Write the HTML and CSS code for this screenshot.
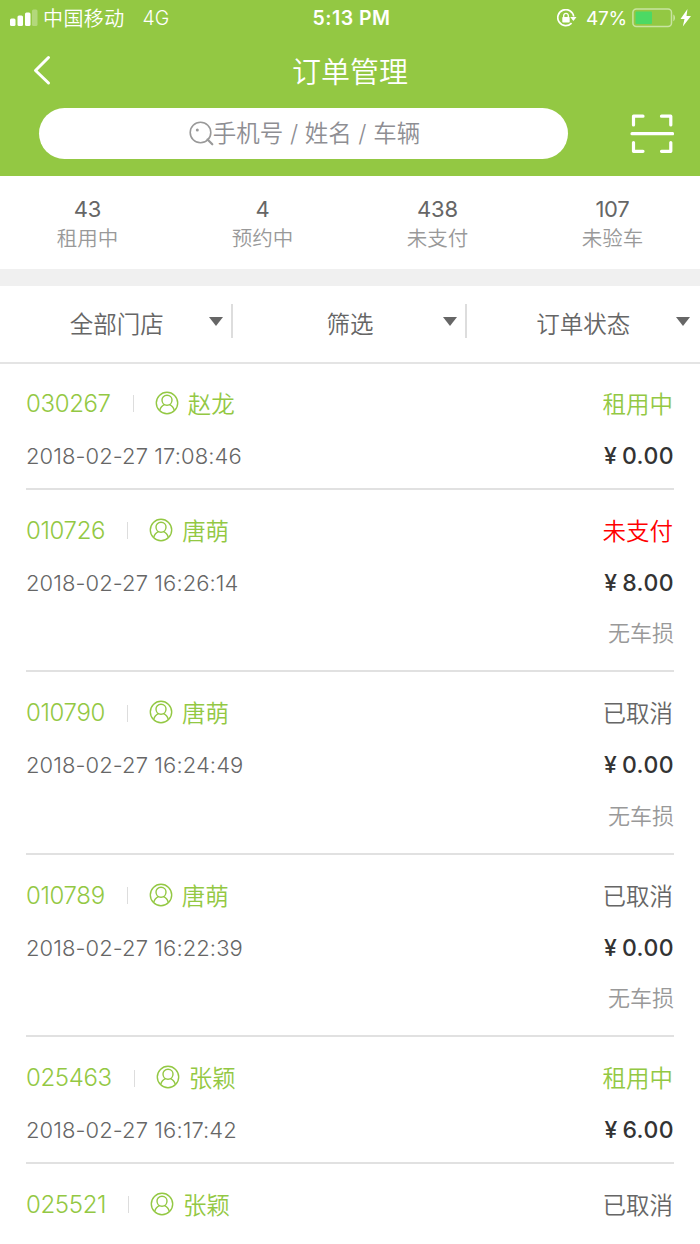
FILE: index.html
```
<!DOCTYPE html>
<html lang="zh-CN">
<head>
<meta charset="utf-8">
<title>订单管理</title>
<link rel="stylesheet" href="styles.css">
</head>
<body>
<svg class="defs" width="0" height="0" aria-hidden="true">
  <symbol id="user" viewBox="0 0 24 24"><g fill="none" stroke="currentColor" stroke-width="1.400"><circle cx="12" cy="12" r="10.700"/><path d="M12 4.200c3.100 0 5 2.200 5 4.900 0 2.900-2 5.200-5 5.200s-5-2.300-5-5.200c0-2.700 1.900-4.900 5-4.900zM4.700 19.500c.8-3 2.600-4.900 5-5.800v-.6M19.300 19.500c-.8-3-2.600-4.900-5-5.800v-.6"/></g></symbol>
</svg>
<header class="header">
  <div class="status-bar">
    <div class="carrier">
      <svg width="28" height="18" viewBox="0 0 28 18" fill="#fff"><rect x="0" y="9.500" width="5.500" height="7.500" rx="1.500"/><rect x="7.500" y="6.500" width="5.500" height="10.500" rx="1.500"/><rect x="15" y="3.500" width="5.500" height="13.500" rx="1.500"/><rect x="22" y=".5" width="5.500" height="16.500" rx="1.500" opacity=".3"/></svg>
      <span class="carrier-name">中国移动</span><span class="network">4G</span>
    </div>
    <div class="clock">5:13 PM</div>
    <div class="power">
      <svg class="lock" width="20" height="18" viewBox="0 0 20 18"><path d="M14.600 14.100A8 8 0 1 1 16.700 7.500" fill="none" stroke="#fff" stroke-width="1.700"/><path d="M13.200 8h6.300l-3.100 4z" fill="#fff"/><rect x="5.300" y="8" width="7.400" height="5.400" rx=".7" fill="#fff"/><path d="M6.700 8.500V6.600a2.300 2.300 0 0 1 4.600 0v1.900" fill="none" stroke="#fff" stroke-width="1.300"/></svg>
      <span class="percent">47%</span>
      <svg class="battery" width="44" height="20" viewBox="0 0 44 20"><rect x=".9" y=".9" width="38.600" height="17.700" rx="3.500" fill="none" stroke="#fff" stroke-opacity=".5" stroke-width="1.500"/><rect x="3.500" y="3.500" width="16.500" height="12.500" rx="1" fill="#4cd964"/><path d="M41.300 6.500c2.300 1 2.300 5.700 0 6.700z" fill="#fff" opacity=".5"/></svg>
      <svg class="bolt" width="12" height="18" viewBox="0 0 12 18"><path d="M7.500 0 .5 10h4L2.800 17.500 11 7H6.500z" fill="#fff"/></svg>
    </div>
  </div>
  <div class="nav-bar">
    <svg class="back" width="20" height="32" viewBox="0 0 20 32"><path d="M16.500 2.500 3.500 15.500l13 12.500" fill="none" stroke="#fff" stroke-width="3" stroke-linecap="round" stroke-linejoin="round"/></svg>
    <h1 class="title">订单管理</h1>
  </div>
  <div class="search-row">
    <div class="search">
      <svg width="25" height="25" viewBox="0 0 25 25"><circle cx="11.500" cy="11.500" r="10.300" fill="none" stroke="#999" stroke-width="1.600"/><path d="m18.500 18.500 4.800 4.800" stroke="#999" stroke-width="2.200" stroke-linecap="round"/><circle cx="8.300" cy="9" r="1.500" fill="#999"/></svg>
      <span class="placeholder">手机号 / 姓名 / 车辆</span>
    </div>
    <svg class="scan" width="44" height="40" viewBox="0 0 44 40"><path d="M3.500 11V2.200H13M31.500 2.200h9.300V11M3.500 28.500v8.800H13M31.500 37.300h9.300v-8.800" fill="none" stroke="#fff" stroke-width="3.200" stroke-linecap="round" stroke-linejoin="round"/><path d="M2 19.700h40.500" stroke="#fff" stroke-width="3.200" stroke-linecap="round"/></svg>
  </div>
</header>
<section class="stats">
  <div class="stat"><b class="count">43</b><span class="label">租用中</span></div>
  <div class="stat"><b class="count">4</b><span class="label">预约中</span></div>
  <div class="stat"><b class="count">438</b><span class="label">未支付</span></div>
  <div class="stat"><b class="count">107</b><span class="label">未验车</span></div>
</section>
<nav class="filters">
  <div class="filter"><span class="filter-name">全部门店</span><i class="caret"></i></div>
  <div class="filter"><span class="filter-name">筛选</span><i class="caret"></i></div>
  <div class="filter"><span class="filter-name">订单状态</span><i class="caret"></i></div>
</nav>
<main class="orders">
  <article class="order">
    <div class="line head"><span class="id">030267</span><i class="bar"></i><svg class="user"><use href="#user"/></svg><span class="name">赵龙</span><span class="state active">租用中</span></div>
    <div class="line"><time class="time">2018-02-27 17:08:46</time><span class="price">¥ 0.00</span></div>
  </article>
  <article class="order tall">
    <div class="line head"><span class="id">010726</span><i class="bar"></i><svg class="user"><use href="#user"/></svg><span class="name">唐萌</span><span class="state unpaid">未支付</span></div>
    <div class="line"><time class="time">2018-02-27 16:26:14</time><span class="price">¥ 8.00</span></div>
    <div class="damage">无车损</div>
  </article>
  <article class="order tall">
    <div class="line head"><span class="id">010790</span><i class="bar"></i><svg class="user"><use href="#user"/></svg><span class="name">唐萌</span><span class="state">已取消</span></div>
    <div class="line"><time class="time">2018-02-27 16:24:49</time><span class="price">¥ 0.00</span></div>
    <div class="damage">无车损</div>
  </article>
  <article class="order tall">
    <div class="line head"><span class="id">010789</span><i class="bar"></i><svg class="user"><use href="#user"/></svg><span class="name">唐萌</span><span class="state">已取消</span></div>
    <div class="line"><time class="time">2018-02-27 16:22:39</time><span class="price">¥ 0.00</span></div>
    <div class="damage">无车损</div>
  </article>
  <article class="order">
    <div class="line head"><span class="id">025463</span><i class="bar"></i><svg class="user"><use href="#user"/></svg><span class="name">张颖</span><span class="state active">租用中</span></div>
    <div class="line"><time class="time">2018-02-27 16:17:42</time><span class="price">¥ 6.00</span></div>
  </article>
  <article class="order">
    <div class="line head"><span class="id">025521</span><i class="bar"></i><svg class="user"><use href="#user"/></svg><span class="name">张颖</span><span class="state">已取消</span></div>
  </article>
</main>
</body>
</html>
```
FILE: styles.css
```
* { box-sizing: border-box; }
body {
  margin: 0;
  width: 700px;
  height: 1244px;
  overflow: hidden;
  background: #fff;
  color: #666;
  font-family: Inter, "Noto Sans CJK SC", sans-serif;
  font-weight: 350;
  white-space: nowrap;
}
svg { display: block; flex: none; }
.defs { position: absolute; }
.header { height: 176px; background: #93c843; color: #fff; }
.status-bar { display: grid; grid-template-columns: 1fr auto 1fr; align-items: center; height: 36px; padding: 0 8px 0 10px; }
.carrier, .power { display: flex; align-items: center; }
.carrier-name { margin-left: 5px; padding-bottom: 1px; font-size: 20px; letter-spacing: .4px; }
.network { margin-left: 18px; font-size: 19.500px; }
.clock { padding-left: 1px; font-size: 19.500px; font-weight: 600; letter-spacing: .5px; }
.power { justify-content: flex-end; }
.percent { margin: 0 5px 0 9px; font-size: 19px; font-weight: 400; letter-spacing: -.2px; }
.bolt { margin-left: 4px; }
.nav-bar { display: grid; grid-template-columns: 1fr auto 1fr; align-items: center; height: 72px; padding: 0 32px 2px; }
.title { grid-column: 2; margin: 0; padding-top: 3px; font-size: 29px; font-weight: 350; line-height: 40px; }
.search-row { display: flex; align-items: center; justify-content: space-between; height: 51px; padding: 0 26px 0 39px; }
.search { display: flex; align-items: center; justify-content: center; width: 529px; height: 51px; padding-left: 2px; border-radius: 26px; background: #fff; color: #8e8e93; }
.placeholder { margin-left: -1px; font-size: 23.500px; line-height: 34px; }
.stats { display: grid; grid-template-columns: repeat(4, 1fr); height: 110px; padding-top: 19px; border-bottom: 17px solid #f0f0f0; text-align: center; }
.count { display: block; font-size: 22px; font-weight: 400; line-height: 29px; letter-spacing: -.2px; }
.label { display: block; color: #999; font-size: 20.500px; line-height: 29px; }
.filters { display: grid; grid-template-columns: repeat(3, 1fr); height: 78px; padding-top: 18px; border-bottom: 2px solid #e4e4e4; }
.filter { display: flex; align-items: center; height: 34px; padding-right: 8px; border-right: 2px solid #ddd; }
.filter:last-child { border-right: 0; padding-right: 10px; }
.filter-name { flex: 1; padding: 4px 0 0 24px; text-align: center; font-size: 23.500px; }
.caret { border: 7px solid transparent; border-top: 9px solid #666; border-bottom: 0; }
.orders { padding: 0 26px; }
.order { height: 126.500px; padding-top: 13.600px; border-bottom: 2px solid #e1e1e1; }
.order:first-child { height: 125.500px; padding-top: 12px; }
.order.tall { height: 182.500px; }
.line { display: flex; align-items: center; height: 53px; }
.head { color: #93c843; }
.id { padding-top: 1px; font-size: 24px; font-weight: 300; letter-spacing: -.35px; }
.bar { width: 1px; height: 17px; margin: 2px 21px 0 22px; background: #ddd; }
.user { width: 24px; height: 24px; }
.name { margin-left: 9px; font-size: 23.500px; }
.state { margin: 0 1px 0 auto; color: #666; font-size: 23.500px; }
.state.active { color: #93c843; }
.state.unpaid { color: #f00; }
.time { font-size: 22px; font-weight: 300; letter-spacing: .08px; }
.price { margin-left: auto; color: #333; font-size: 23px; font-weight: 500; word-spacing: -2px; letter-spacing: .45px; }
.damage { color: #999; font-size: 22px; line-height: 48px; text-align: right; }
```
